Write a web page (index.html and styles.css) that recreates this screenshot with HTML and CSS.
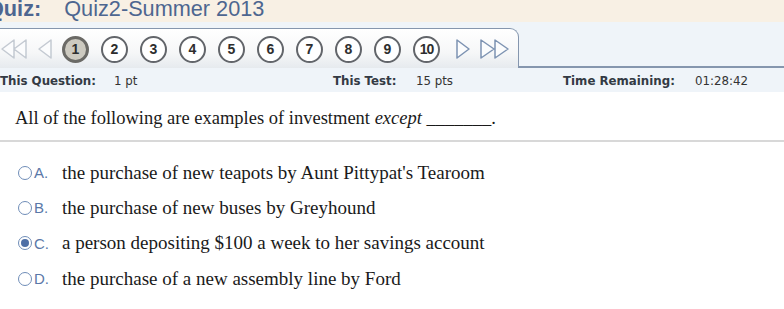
FILE: index.html
```html
<!DOCTYPE html>
<html lang="en">
<head>
    <meta charset="UTF-8">
    <title>Quiz2-Summer 2013</title>
    <link rel="stylesheet" href="styles.css">
</head>
<body>
    <div id="title-bar">
        <span class="title-label">Quiz:</span>
        <span class="title-name">Quiz2-Summer 2013</span>
    </div>

    <div id="nav-band">
        <div id="nav-tab">
            <!-- first / previous (disabled) -->
            <svg class="arrow" width="28" height="22" viewBox="0 0 28 22">
                <path d="M14 2 L2 11 L14 20 Z M26 2 L14 11 L26 20 Z" fill="#fbfcfd" stroke="#c4cad2" stroke-width="1.5" stroke-linejoin="round"/>
            </svg>
            <svg class="arrow prev" width="16" height="22" viewBox="0 0 16 22">
                <path d="M14 2 L2 11 L14 20 Z" fill="#fbfcfd" stroke="#c4cad2" stroke-width="1.5" stroke-linejoin="round"/>
            </svg>
            <div class="numbers">
                <span class="num current">1</span>
                <span class="num">2</span>
                <span class="num">3</span>
                <span class="num">4</span>
                <span class="num">5</span>
                <span class="num">6</span>
                <span class="num">7</span>
                <span class="num">8</span>
                <span class="num">9</span>
                <span class="num ten">10</span>
            </div>
            <svg class="arrow next" width="16" height="22" viewBox="0 0 16 22">
                <path d="M2 2 L14 11 L2 20 Z" fill="#fbfcfd" stroke="#7d93b2" stroke-width="1.5" stroke-linejoin="round"/>
            </svg>
            <svg class="arrow last" width="32" height="22" viewBox="0 0 32 22">
                <path d="M2 2 L15 11 L2 20 Z M16 2 L29 11 L16 20 Z" fill="#fbfcfd" stroke="#7d93b2" stroke-width="1.5" stroke-linejoin="round"/>
            </svg>
        </div>
    </div>

    <div id="info-row">
        <div class="info"><b class="q-label">This Question:</b><span>1 pt</span></div>
        <div class="info"><b class="t-label">This Test:</b><span>15 pts</span></div>
        <div class="info"><b class="r-label">Time Remaining:</b><span>01:28:42</span></div>
    </div>

    <div id="question">
        All of the following are examples of investment <i>except</i> _______.
    </div>

    <div id="answers">
        <div class="answer"><span class="radio"></span><span class="letter">A.</span><span class="text">the purchase of new teapots by Aunt Pittypat's Tearoom</span></div>
        <div class="answer"><span class="radio"></span><span class="letter">B.</span><span class="text">the purchase of new buses by Greyhound</span></div>
        <div class="answer"><span class="radio checked"></span><span class="letter">C.</span><span class="text">a person depositing $100 a week to her savings account</span></div>
        <div class="answer"><span class="radio"></span><span class="letter">D.</span><span class="text">the purchase of a new assembly line by Ford</span></div>
    </div>
</body>
</html>
```

FILE: styles.css
```css
body {
    margin: 0;
    background-color: white;
    font-family: "Liberation Sans", Arial, sans-serif;
    overflow: hidden;
}
#title-bar {
    background-color: #f8f0e4;
    height: 22px;
    line-height: 14px;
    font-size: 21.7px;
    color: #4d6690;
    white-space: nowrap;
    overflow: hidden;
    padding-top: 2px;
    box-sizing: border-box;
    margin-left: -13px;
}
.title-label {
    font-weight: bold;
    margin-right: 17px;
}
#nav-band {
    background-color: #eff4f9;
    height: 46px;
    padding-top: 6px;
    box-sizing: border-box;
    border-bottom: 2px solid #8596ae;
}
#nav-tab {
    width: 519px;
    height: 40px;
    box-sizing: border-box;
    border-top: 1px solid #8596ae;
    border-right: 1px solid #8596ae;
    border-top-right-radius: 9px;
    background: linear-gradient(#ffffff, #f6f7f8 60%, #e6eaee);
    display: flex;
    align-items: center;
    padding-top: 1px;
}
.arrow {
    display: block;
    flex: none;
}
.prev {
    margin-left: 9px;
}
.numbers {
    display: flex;
    gap: 12px;
    margin-left: 9px;
}
.num {
    width: 23px;
    height: 23px;
    border: 2px solid #62656a;
    border-radius: 50%;
    background-color: white;
    display: flex;
    justify-content: center;
    align-items: center;
    font-size: 14px;
    font-weight: bold;
    color: #2e2e2e;
}
.num.current {
    background-color: #cdcac0;
    border: 3px solid #6b6a66;
    width: 21px;
    height: 21px;
}
.num.ten {
    letter-spacing: -1px;
}
.next {
    margin-left: 15px;
}
.last {
    margin-left: 8px;
}
#info-row {
    background-color: #eff4f9;
    height: 24px;
    padding-top: 2px;
    box-sizing: border-box;
    display: grid;
    grid-template-columns: 333px 230px 1fr;
    align-items: center;
    font-family: "DejaVu Sans", Verdana, sans-serif;
    font-size: 11.8px;
    color: #333;
}
.info b {
    display: inline-block;
    color: #333a44;
}
.q-label { width: 114px; }
.t-label { width: 83px; }
.r-label { width: 132px; }
#question {
    font-family: "Liberation Serif", "Times New Roman", serif;
    font-size: 18.5px;
    color: #1a1a1a;
    padding: 16px 15px 0;
    height: 32px;
    border-bottom: 2px solid #d8d8d8;
}
#answers {
    padding-top: 13px;
}
.answer {
    display: flex;
    align-items: center;
    height: 35.3px;
    padding-left: 18px;
    font-family: "Liberation Serif", "Times New Roman", serif;
    font-size: 19px;
    color: #1a1a1a;
}
.radio {
    width: 12px;
    height: 12px;
    border: 1px solid #6f8db8;
    border-radius: 50%;
    box-sizing: content-box;
    background-color: white;
    position: relative;
}
.radio.checked::after {
    content: "";
    position: absolute;
    left: 2px;
    top: 2px;
    width: 8px;
    height: 8px;
    border-radius: 50%;
    background-color: #4e6fa6;
}
.letter {
    font-family: "Liberation Sans", Arial, sans-serif;
    font-size: 15px;
    color: #5a78a8;
    width: 28px;
    margin-left: 2px;
}
```
